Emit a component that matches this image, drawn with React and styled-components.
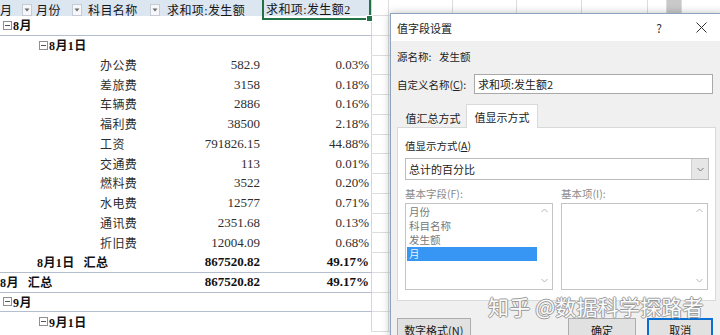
import styled, { css, createGlobalStyle } from "styled-components";

const GlobalStyle = createGlobalStyle`
  html, body {
    margin: 0;
    padding: 0;
    background: #fff;
  }
  body {
    overflow: hidden;
  }
`;

const Stage = styled.div`
  position: relative;
  width: 720px;
  height: 335px;
  overflow: hidden;
  background: #fff;
`;

/* ---------- spreadsheet ---------- */

const Sheet = styled.div`
  display: flex;
  flex-direction: column;
  font-family: "Liberation Serif", "Noto Sans CJK SC", serif;
  color: #262626;
`;

const Row = styled.div`
  display: flex;
  flex: none;
  height: ${(p) => (p.$head ? 16 : 19.75)}px;
`;

const Pivot = styled.div`
  display: grid;
  grid-template-columns: 34px 51px 77px 100px 109px;
  width: 372px;
  flex: none;
  box-sizing: border-box;
  border-right: 1px solid #d6d6d6;
  border-bottom: 1px solid ${(p) => (p.$line ? "#b3bfcf" : "transparent")};
  background: ${(p) => (p.$head ? "#dce6f1" : "#fff")};
`;

const GridCell = styled.div`
  flex: none;
  width: ${(p) => p.$w}px;
  box-sizing: border-box;
  border-right: 1px solid #dcdcdc;
  border-bottom: 1px solid #dcdcdc;
  background: ${(p) => (p.$pane ? "#c9c9c9" : "#fff")};
`;

const HeadCell = styled.div`
  position: relative;
  display: flex;
  align-items: center;
  justify-content: space-between;
  box-sizing: border-box;
  padding: ${(p) => p.$pad || "0 2px 0 0"};
  font-size: 12px;
  letter-spacing: 0.4px;
  color: #151515;
  white-space: nowrap;
  ${(p) =>
    p.$selected &&
    css`
      border: 2px solid #217346;
      border-top: none;
      padding-left: 2px;
    `}
`;

const FillHandle = styled.span`
  position: absolute;
  right: -4px;
  bottom: -4px;
  width: 5px;
  height: 5px;
  background: #217346;
  border: 1px solid #fff;
`;

const FilterBtn = styled.span`
  display: flex;
  align-items: center;
  justify-content: center;
  flex: none;
  width: 10px;
  height: 12px;
  box-sizing: border-box;
  border: 1px solid #c5ccd6;
  background: #f6f7f9;
`;

const Cell = styled.div`
  display: flex;
  align-items: center;
  gap: ${(p) => p.$gap || 0}px;
  justify-content: ${(p) => (p.$right ? "flex-end" : "flex-start")};
  padding: ${(p) => p.$pad || "0 2px"};
  white-space: nowrap;
  min-width: 0;
  overflow: visible;
  font-size: ${(p) => (p.$num ? 13 : 12)}px;
  letter-spacing: ${(p) => (p.$num ? 0 : 0.4)}px;
  font-weight: ${(p) => (p.$bold ? 700 : 400)};
  color: ${(p) => (p.$bold ? "#111" : "#2e2e2e")};
`;

const Toggle = () => (
  <svg width="9" height="9" viewBox="0 0 9 9" style={{ flex: "none", marginRight: 1 }}>
    <rect x="0.5" y="0.5" width="8" height="8" fill="#fff" stroke="#8f8f8f" />
    <line x1="2" y1="4.5" x2="7" y2="4.5" stroke="#555" />
  </svg>
);

const Caret = () => (
  <svg width="6" height="4" viewBox="0 0 6 4">
    <path d="M0.5 0.5 L5.5 0.5 L3 3.5 Z" fill="#6b6b6b" />
  </svg>
);

const EXTRA = [17, 64, 64, 65, 66, 19, 15, 60];

const Extras = () =>
  EXTRA.map((w, i) => <GridCell key={i} $w={w} $pane={i === 6} />);

const items = [
  ["办公费", "582.9", "0.03%"],
  ["差旅费", "3158", "0.18%"],
  ["车辆费", "2886", "0.16%"],
  ["福利费", "38500", "2.18%"],
  ["工资", "791826.15", "44.88%"],
  ["交通费", "113", "0.01%"],
  ["燃料费", "3522", "0.20%"],
  ["水电费", "12577", "0.71%"],
  ["通讯费", "2351.68", "0.13%"],
  ["折旧费", "12004.09", "0.68%"],
];

function SheetView() {
  return (
    <Sheet>
      <Row $head>
        <Pivot $head>
          <HeadCell>
            月<FilterBtn><Caret /></FilterBtn>
          </HeadCell>
          <HeadCell $pad="0 3px 0 2px">
            月份<FilterBtn><Caret /></FilterBtn>
          </HeadCell>
          <HeadCell $pad="0 2px 0 3px">
            科目名称<FilterBtn><Caret /></FilterBtn>
          </HeadCell>
          <HeadCell $pad="0 0 0 5px">求和项:发生额</HeadCell>
          <HeadCell $selected>
            求和项:发生额2
            <FillHandle />
          </HeadCell>
        </Pivot>
        <Extras />
      </Row>

      <Row>
        <Pivot $line>
          <Cell $pad="0 0 0 3px" $bold>
            <Toggle />8月
          </Cell>
        </Pivot>
        <Extras />
      </Row>

      <Row>
        <Pivot>
          <div />
          <Cell $pad="0 0 0 5px" $bold>
            <Toggle />8月1日
          </Cell>
        </Pivot>
        <Extras />
      </Row>

      {items.map(([name, val, pct]) => (
        <Row key={name}>
          <Pivot>
            <div />
            <div />
            <Cell $pad="0 0 0 15px">{name}</Cell>
            <Cell $right $num>{val}</Cell>
            <Cell $right $num>{pct}</Cell>
          </Pivot>
          <Extras />
        </Row>
      ))}

      <Row>
        <Pivot $line>
          <div />
          <Cell $pad="0 0 0 3px" $bold $gap={9}>
            <span>8月1日</span>
            <span>汇总</span>
          </Cell>
          <div />
          <Cell $right $num $bold>867520.82</Cell>
          <Cell $right $num $bold>49.17%</Cell>
        </Pivot>
        <Extras />
      </Row>

      <Row>
        <Pivot $line>
          <Cell $pad="0" $bold $gap={9}>
            <span>8月</span>
            <span>汇总</span>
          </Cell>
          <div />
          <div />
          <Cell $right $num $bold>867520.82</Cell>
          <Cell $right $num $bold>49.17%</Cell>
        </Pivot>
        <Extras />
      </Row>

      <Row>
        <Pivot $line>
          <Cell $pad="0 0 0 3px" $bold>
            <Toggle />9月
          </Cell>
        </Pivot>
        <Extras />
      </Row>

      <Row>
        <Pivot>
          <div />
          <Cell $pad="0 0 0 5px" $bold>
            <Toggle />9月1日
          </Cell>
        </Pivot>
        <Extras />
      </Row>
    </Sheet>
  );
}

/* ---------- dialog ---------- */

const Dialog = styled.div`
  position: absolute;
  left: 390px;
  top: 13px;
  width: 334px;
  height: 340px;
  box-sizing: border-box;
  border: 1px solid #8ea3bf;
  background: #f0f0f0;
  box-shadow: 0 0 8px rgba(0, 0, 0, 0.25);
  font-family: "Noto Sans CJK SC", sans-serif;
  font-size: 10.5px;
  color: #222;
  display: flex;
  flex-direction: column;
`;

const TitleBar = styled.div`
  display: flex;
  align-items: center;
  height: 27px;
  flex: none;
  background: #fff;
  padding-left: 6px;
  font-size: 11px;
  color: #1a1a1a;
`;

const TitleBtn = styled.span`
  display: flex;
  align-items: center;
  justify-content: center;
  width: ${(p) => p.$w}px;
  margin-left: ${(p) => p.$ml || 0}px;
  font-size: 12px;
  color: #333;
`;

const Body = styled.div`
  display: flex;
  flex-direction: column;
  padding: 0 10px 0 6px;
`;

const Line = styled.div`
  display: flex;
  align-items: center;
  height: ${(p) => p.$h || 16}px;
  margin-top: ${(p) => p.$mt || 0}px;
  gap: ${(p) => p.$gap || 0}px;
  color: ${(p) => (p.$muted ? "#8b8b8b" : "inherit")};
`;

const Label = styled.span`
  width: ${(p) => (p.$w ? `${p.$w}px` : "auto")};
  flex: none;
`;

const Input = styled.div`
  display: flex;
  align-items: center;
  width: 243px;
  height: 20px;
  box-sizing: border-box;
  padding-left: 3px;
  border: 1px solid #a9a9a9;
  background: #fff;
  font-size: 11px;
`;

const Tabs = styled.div`
  display: flex;
  align-items: flex-end;
  height: 24px;
  margin-top: 10px;
  padding-left: 3px;
  margin-bottom: -1px;
  position: relative;
  z-index: 1;
`;

const Tab = styled.div`
  display: flex;
  align-items: center;
  justify-content: center;
  box-sizing: border-box;
  width: ${(p) => (p.$active ? 72 : 66)}px;
  height: ${(p) => (p.$active ? 24 : 21)}px;
  font-size: 11px;
  background: ${(p) => (p.$active ? "#fff" : "transparent")};
  border: 1px solid ${(p) => (p.$active ? "#d9d9d9" : "transparent")};
  border-bottom: none;
`;

const Panel = styled.div`
  width: 319px;
  box-sizing: border-box;
  background: #fff;
  border: 1px solid #d9d9d9;
  padding: 9px 7px 10px 7px;
  display: flex;
  flex-direction: column;
`;

const Select = styled.div`
  display: flex;
  align-items: center;
  justify-content: space-between;
  width: 304px;
  height: 22px;
  margin-top: 5px;
  box-sizing: border-box;
  border: 1px solid #bcbcbc;
  background: #fff;
  padding-left: 3px;
  font-size: 11px;
`;

const SelectArrow = styled.span`
  display: flex;
  align-items: center;
  justify-content: center;
  width: 16px;
  height: 100%;
  background: #e6e6e6;
  border-left: 1px solid #d0d0d0;
`;

const Columns = styled.div`
  display: grid;
  grid-template-columns: 148px 147px;
  column-gap: 8px;
`;

const ListBox = styled.div`
  display: flex;
  height: 87px;
  margin-top: 2px;
  box-sizing: border-box;
  border: 1px solid #c4c4c4;
  background: #fff;
`;

const ListItems = styled.div`
  flex: 1;
  display: flex;
  flex-direction: column;
  padding: 1px 0 0 1px;
`;

const ListItem = styled.div`
  height: 14px;
  line-height: 14px;
  padding-left: 2px;
  color: ${(p) => (p.$selected ? "#e8f1ff" : "#777")};
  background: ${(p) => (p.$selected ? "#3795f4" : "transparent")};
`;

const ScrollTrack = styled.div`
  width: 15px;
  flex: none;
  display: flex;
  flex-direction: column;
  justify-content: space-between;
  align-items: center;
  padding: 4px 0 6px;
`;

const Buttons = styled.div`
  display: flex;
  align-items: flex-start;
  margin-top: 17px;
`;

const Button = styled.div`
  display: flex;
  align-items: center;
  justify-content: center;
  width: ${(p) => p.$w}px;
  height: 24px;
  margin-left: ${(p) => p.$ml || 0}px;
  box-sizing: border-box;
  border: 1px solid ${(p) => (p.$primary ? "#0a6fd0" : "#adadad")};
  box-shadow: ${(p) => (p.$primary ? "inset 0 0 0 1px #0a6fd0" : "none")};
  background: #e1e1e1;
  font-size: 11px;
  color: #1a1a1a;
`;

const Watermark = styled.div`
  position: absolute;
  left: 97px;
  top: 279px;
  font-size: 21px;
  line-height: 26px;
  letter-spacing: 0.2px;
  color: #fbfbfb;
  white-space: nowrap;
  text-shadow: 1px 0 0 #9a9a9a, -1px 0 0 #9a9a9a, 0 1px 0 #9a9a9a, 0 -1px 0 #9a9a9a;
`;

const Chevron = ({ up, color = "#b5b5b5" }) => (
  <svg width="7" height="5" viewBox="0 0 7 5">
    <path d={up ? "M0.5 4 L3.5 1 L6.5 4" : "M0.5 1 L3.5 4 L6.5 1"} fill="none" stroke={color} />
  </svg>
);

const CloseIcon = () => (
  <svg width="11" height="11" viewBox="0 0 11 11">
    <path d="M0.5 0.5 L10.5 10.5 M10.5 0.5 L0.5 10.5" stroke="#333" strokeWidth="1" />
  </svg>
);

function FieldDialog() {
  return (
    <Dialog>
      <TitleBar>
        值字段设置
        <TitleBtn $w={30} style={{ marginLeft: "auto" }}>?</TitleBtn>
        <TitleBtn $w={44} $ml={5}>
          <CloseIcon />
        </TitleBtn>
      </TitleBar>
      <Body>
        <Line $mt={7}>
          <Label $w={42}>源名称:</Label>
          发生额
        </Line>
        <Line $h={20} $mt={10}>
          <Label $w={77}>
            自定义名称(<u>C</u>):
          </Label>
          <Input>求和项:发生额2</Input>
        </Line>
        <Tabs>
          <Tab>值汇总方式</Tab>
          <Tab $active>值显示方式</Tab>
        </Tabs>
        <Panel>
          <Line>
            值显示方式(<u>A</u>)
          </Line>
          <Select>
            总计的百分比
            <SelectArrow>
              <Chevron color="#777" />
            </SelectArrow>
          </Select>
          <Columns>
            <Line $mt={5} $muted>基本字段(F):</Line>
            <Line $mt={5} $muted>基本项(I):</Line>
            <ListBox>
              <ListItems>
                <ListItem>月份</ListItem>
                <ListItem>科目名称</ListItem>
                <ListItem>发生额</ListItem>
                <ListItem $selected>月</ListItem>
              </ListItems>
              <ScrollTrack>
                <Chevron up />
                <Chevron />
              </ScrollTrack>
            </ListBox>
            <ListBox>
              <ListItems />
              <ScrollTrack>
                <Chevron up />
                <Chevron />
              </ScrollTrack>
            </ListBox>
          </Columns>
        </Panel>
        <Buttons>
          <Button $w={74}>数字格式(N)</Button>
          <Button $w={69} $ml={97}>确定</Button>
          <Button $w={66} $ml={11} $primary>取消</Button>
        </Buttons>
      </Body>
      <Watermark>知乎 @数据科学探路者</Watermark>
    </Dialog>
  );
}

export default function App() {
  return (
    <Stage>
      <GlobalStyle />
      <SheetView />
      <FieldDialog />
    </Stage>
  );
}
